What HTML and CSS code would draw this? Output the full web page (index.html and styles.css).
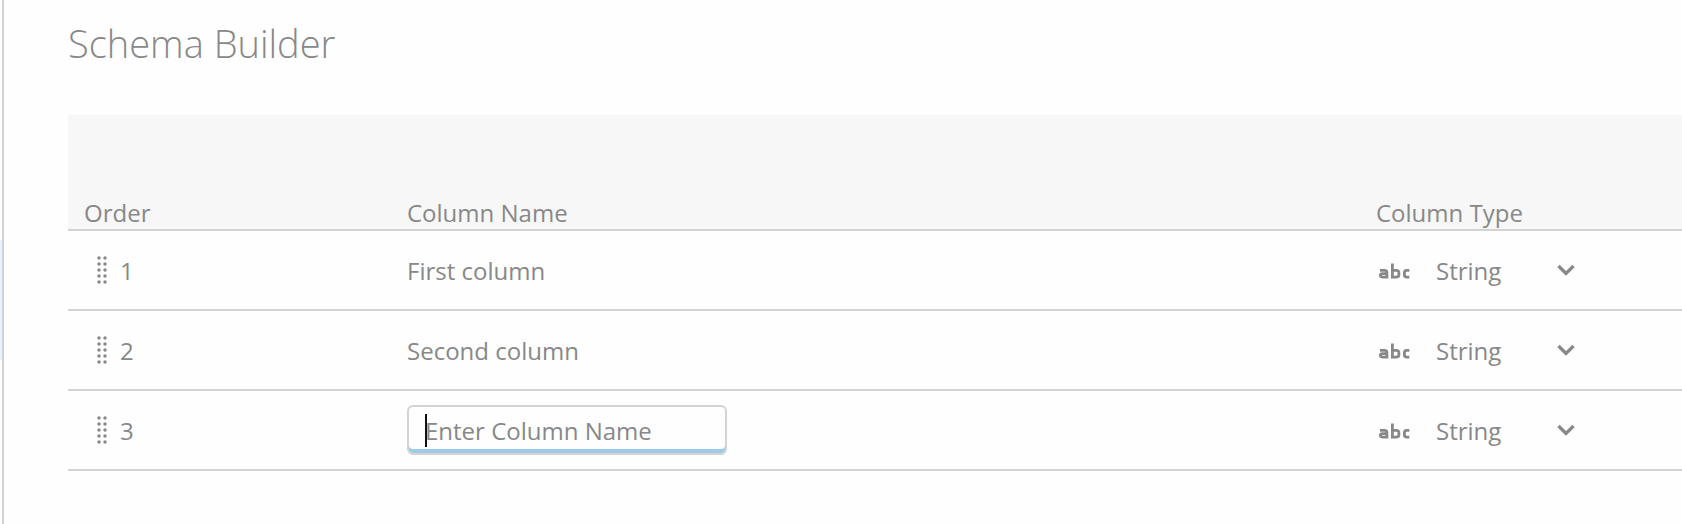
FILE: index.html
```html
<!DOCTYPE html>
<html lang="en">
<head>
<meta charset="utf-8">
<title>Schema Builder</title>
<link rel="stylesheet" href="styles.css">
</head>
<body>
<svg class="sprite" aria-hidden="true">
  <symbol id="grip" viewBox="0 0 12 30">
    <path d="M3 3h0M9 3h0M3 9h0M9 9h0M3 15h0M9 15h0M3 21h0M9 21h0M3 27h0M9 27h0" fill="none" stroke="currentColor" stroke-width="3.5" stroke-linecap="round"/>
  </symbol>
  <symbol id="abc" viewBox="0 0 32 16">
    <path d="M1 7.300H5.500Q7.900 7.300 7.900 9.600V14.100H3.600Q1.400 14.100 1.400 12.400Q1.400 10.600 3.600 10.600H7.500M13.400 .5V14.100H17.200Q19.900 14.100 19.900 11.700V9.700Q19.900 7.300 17.200 7.300H13.400M30.300 7.300H27.800Q25.400 7.300 25.400 9.700V11.700Q25.400 14.100 27.800 14.100H30.300" fill="none" stroke="currentColor" stroke-width="2.8"/>
  </symbol>
  <symbol id="chevron" viewBox="0 0 18 12">
    <path d="M1.500 2L9 9.500L16.500 2" fill="none" stroke="currentColor" stroke-width="3.300"/>
  </symbol>
</svg>
<div class="app">
  <aside class="rail"><div class="rail-active"></div></aside>
  <main class="content">
    <h1 class="title">Schema Builder</h1>
    <table class="schema">
      <thead>
        <tr>
          <th class="col-order" scope="col">Order</th>
          <th class="col-name" scope="col">Column Name</th>
          <th class="col-type" scope="col">Column Type</th>
        </tr>
      </thead>
      <tbody>
        <tr>
          <td><div class="order"><svg class="grip"><use href="#grip"/></svg>1</div></td>
          <td>First column</td>
          <td><div class="type"><svg class="abc"><use href="#abc"/></svg><select class="type-select" aria-label="Type of column 1"><option>String</option></select><svg class="chevron"><use href="#chevron"/></svg></div></td>
        </tr>
        <tr>
          <td><div class="order"><svg class="grip"><use href="#grip"/></svg>2</div></td>
          <td>Second column</td>
          <td><div class="type"><svg class="abc"><use href="#abc"/></svg><select class="type-select" aria-label="Type of column 2"><option>String</option></select><svg class="chevron"><use href="#chevron"/></svg></div></td>
        </tr>
        <tr>
          <td><div class="order"><svg class="grip"><use href="#grip"/></svg>3</div></td>
          <td><div class="field"><input class="name-input" type="text" placeholder="Enter Column Name" aria-label="Name of column 3"><span class="caret"></span></div></td>
          <td><div class="type"><svg class="abc"><use href="#abc"/></svg><select class="type-select" aria-label="Type of column 3"><option>String</option></select><svg class="chevron"><use href="#chevron"/></svg></div></td>
        </tr>
      </tbody>
    </table>
  </main>
</div>
</body>
</html>
```
FILE: styles.css
```css
* { box-sizing: border-box; }
body {
  margin: 0;
  background: #fefefe;
  color: #888;
  font: 24px/32px "Open Sans", "Noto Sans", sans-serif;
}
.sprite { position: absolute; width: 0; height: 0; }
.app { display: flex; min-height: 100vh; }
.rail {
  flex: none;
  width: 4px;
  padding-top: 240px;
  border-right: 2px solid #d3d3d3;
}
.rail-active { height: 120px; background: #e6f3fb; }
.content { flex: 1; min-width: 0; padding: 15px 0 48px 64px; }
.title {
  margin: 0 0 44px;
  font-size: 38px;
  line-height: 56px;
  font-weight: 300;
}
.schema { width: 100%; border-collapse: separate; border-spacing: 0; table-layout: fixed; }
.schema th {
  height: 116px;
  padding: 0 16px;
  background: #f7f7f7;
  border-bottom: 2px solid #d3d3d3;
  font-weight: 400;
  text-align: left;
  vertical-align: bottom;
}
.schema td {
  height: 80px;
  padding: 2px 16px 0;
  border-bottom: 2px solid #d3d3d3;
  vertical-align: middle;
}
.col-order { width: 323px; }
.col-type { width: 322px; }
.order { display: flex; align-items: center; gap: 12px; padding-left: 12px; }
.grip { width: 12px; height: 30px; margin-bottom: 2px; }
.type { display: flex; align-items: center; }
.abc { width: 32px; height: 16px; margin: 0 25px 0 3px; }
.type-select {
  width: 140px;
  margin-right: -19px;
  padding: 0;
  border: 0;
  background: transparent;
  color: inherit;
  font: inherit;
  appearance: none;
}
.chevron { width: 18px; height: 12px; margin-bottom: 2px; pointer-events: none; }
.field { position: relative; width: 320px; margin-bottom: 2px; }
.name-input {
  display: block;
  width: 100%;
  height: 50px;
  padding: 0 16px;
  border: 2px solid #d3d3d3;
  border-radius: 6px;
  background: #fefefe;
  box-shadow: inset 0 -4px #9fcbea;
  color: inherit;
  font: inherit;
  outline: 0;
}
.name-input::placeholder { color: #888; opacity: 1; }
.caret {
  position: absolute;
  top: 9px;
  left: 18px;
  width: 2px;
  height: 33px;
  background: #111;
}
```
